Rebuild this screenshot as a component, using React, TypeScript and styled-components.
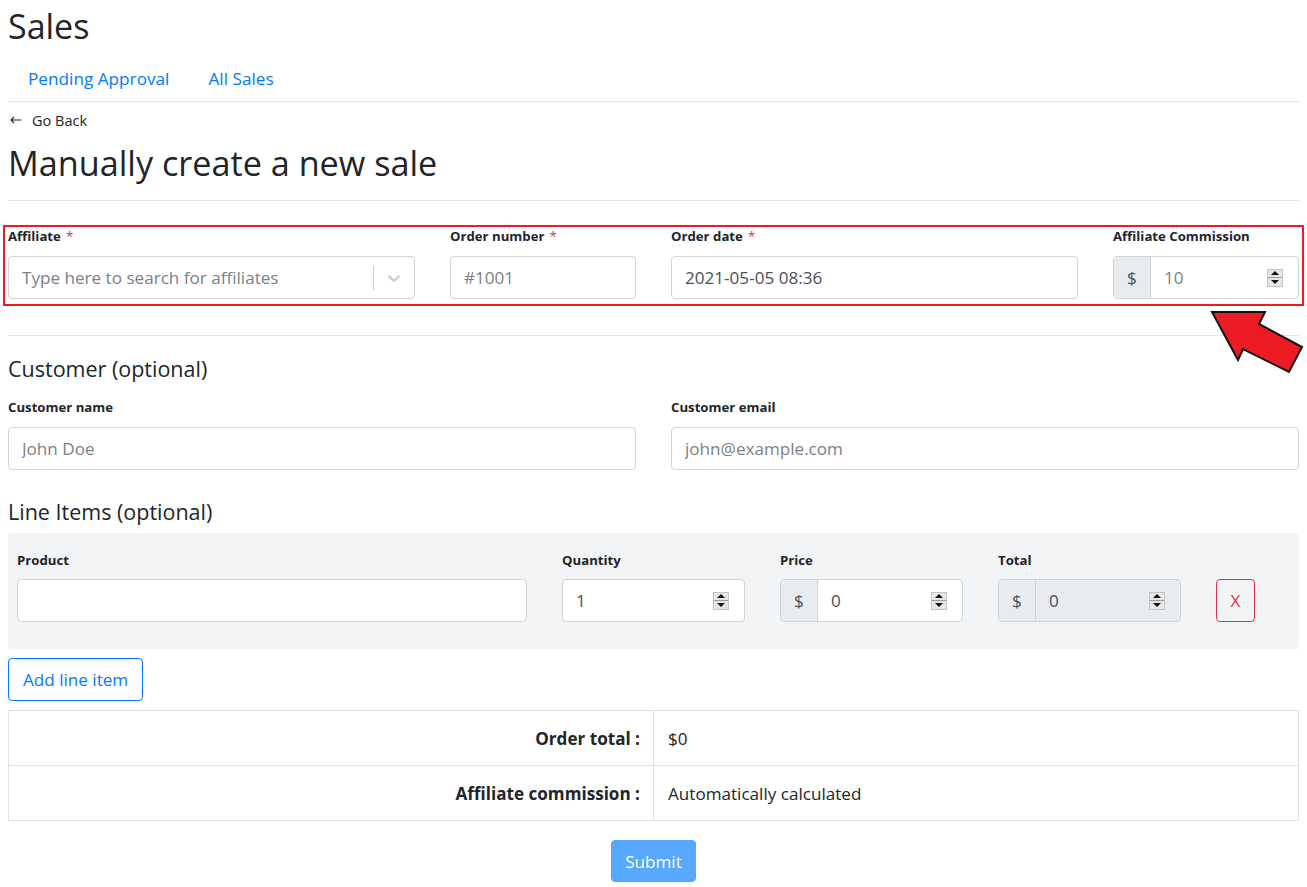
import React from "react";
import styled, { createGlobalStyle } from "styled-components";

const Global = createGlobalStyle`
  html, body { margin: 0; padding: 0; background: #fff; }
  body {
    font-family: "Open Sans", "Noto Sans", Arial, sans-serif;
    color: #212529;
    font-size: 16px;
  }
  * { box-sizing: border-box; }
`;

const Page = styled.div`
  position: relative;
  padding: 0 8px 6px;
  width: 1307px;
`;

const Title = styled.h1`
  margin: 0;
  padding-top: 2px;
  font-size: 34px;
  font-weight: 400;
  line-height: 48px;
`;

const Nav = styled.nav`
  display: flex;
  border-bottom: 1px solid #dee2e6;
  height: 52px;
  padding-top: 5px;
  align-items: center;
`;

const NavLink = styled.a`
  color: #007bff;
  font-size: 17.2px;
  padding: 0 19px 0 20px;
  text-decoration: none;
`;

const Back = styled.a`
  display: flex;
  align-items: center;
  gap: 10px;
  margin-top: 7px;
  font-size: 14.5px;
  color: #212529;
  text-decoration: none;
  height: 22px;
  padding-left: 2px;
`;

const Heading = styled.h2`
  margin: 0;
  font-size: 34.2px;
  font-weight: 400;
  line-height: 44px;
  padding-top: 10px;
`;

const Rule = styled.hr<{ $top: number; $bottom: number }>`
  border: 0;
  border-top: 1px solid #e3e4e6;
  margin: ${(p) => `${p.$top}px 0 ${p.$bottom}px`};
`;

const Highlight = styled.div`
  border: 2px solid #ed1c24;
  margin: 0 -5px;
  padding: 1px 3px 5px;
`;

const Row = styled.div<{ $cols: string; $top?: number }>`
  display: grid;
  grid-template-columns: ${(p) => p.$cols};
  column-gap: 35px;
  margin-top: ${(p) => p.$top ?? 0}px;
`;

const Field = styled.div`
  display: flex;
  flex-direction: column;
  min-width: 0;
`;

const ButtonCell = styled.div`
  display: flex;
  align-items: flex-end;
`;

const Label = styled.label<{ $gap?: number }>`
  font-size: 13.2px;
  font-weight: 700;
  line-height: 16px;
  margin-bottom: ${(p) => p.$gap ?? 11}px;
  display: flex;
  gap: 5px;
`;

const Req = styled.span`
  color: #dc3545;
  font-weight: 400;
`;

const Box = styled.div<{ $disabled?: boolean }>`
  display: flex;
  align-items: center;
  height: 43px;
  border: 1px solid #ced4da;
  border-radius: 4px;
  background: ${(p) => (p.$disabled ? "#e9ecef" : "#fff")};
  overflow: hidden;
`;

const Text = styled.input`
  flex: 1;
  min-width: 0;
  border: 0;
  outline: 0;
  background: transparent;
  font-family: inherit;
  font-size: 17.1px;
  color: #495057;
  padding: 0 13px;
  height: 100%;
  &::placeholder { color: #7b8188; }
`;

const Addon = styled.span`
  width: 37px;
  align-self: stretch;
  display: flex;
  align-items: center;
  justify-content: center;
  background: #e9ecef;
  border-right: 1px solid #ced4da;
  font-size: 17.1px;
  color: #495057;
`;

const Spin = styled.span`
  width: 16px;
  height: 18px;
  margin-right: 15px;
  display: flex;
  flex-direction: column;
  background: #e6e6e6;
  border: 1px solid #c4c4c4;
`;

const SpinHalf = styled.span`
  flex: 1;
  display: flex;
  align-items: center;
  justify-content: center;
  & + & { border-top: 1px solid #9a9a9a; }
`;

const Sep = styled.span`
  width: 1px;
  height: 24px;
  background: #ccc;
`;

const Chevron = styled.span`
  width: 40px;
  display: flex;
  justify-content: center;
  color: #ccc;
`;

const Section = styled.h4<{ $top?: number }>`
  margin: ${(p) => p.$top ?? 0}px 0 0;
  font-size: 21.5px;
  font-weight: 400;
  line-height: 30px;
`;

const LineBox = styled.div`
  background: #f3f4f6;
  border-radius: 4px;
  padding: 19px 9px 27px;
  margin-top: 6px;
`;

const RemoveBtn = styled.button`
  width: 39px;
  height: 43px;
  border: 1px solid #dc3545;
  border-radius: 4px;
  background: transparent;
  color: #dc3545;
  font-family: inherit;
  font-size: 17.1px;
`;

const OutlineBtn = styled.button`
  margin-top: 9px;
  height: 43px;
  padding: 0 14px;
  border: 1px solid #007bff;
  border-radius: 4px;
  background: #fff;
  color: #007bff;
  font-family: inherit;
  font-size: 17.1px;
`;

const Summary = styled.table`
  width: 100%;
  margin-top: 9px;
  border-collapse: collapse;
  font-size: 17.1px;
`;

const Th = styled.th`
  width: 50%;
  text-align: right;
  font-weight: 700;
  border: 1px solid #dee2e6;
  height: 55px;
  padding: 0 13px;
`;

const Td = styled.td`
  border: 1px solid #dee2e6;
  padding: 0 14px;
  height: 55px;
`;

const Actions = styled.div`
  display: flex;
  justify-content: center;
  margin-top: 19px;
`;

const Submit = styled.button`
  height: 42px;
  padding: 0 13px;
  border: 1px solid #007bff;
  background: #007bff;
  opacity: 0.65;
  color: #fff;
  border-radius: 4px;
  font-family: inherit;
  font-size: 17.1px;
`;

const Pointer = styled.svg`
  position: absolute;
  left: 1206px;
  top: 306px;
`;

const Spinner = () => (
  <Spin>
    <SpinHalf>
      <svg width="8" height="4" viewBox="0 0 8 4"><path d="M0 4 L4 0 L8 4Z" fill="#111" /></svg>
    </SpinHalf>
    <SpinHalf>
      <svg width="8" height="4" viewBox="0 0 8 4"><path d="M0 0 L4 4 L8 0Z" fill="#111" /></svg>
    </SpinHalf>
  </Spin>
);

const NumberField = ({ value, prefix, disabled }: { value: string; prefix?: boolean; disabled?: boolean }) => (
  <Box $disabled={disabled}>
    {prefix && <Addon>$</Addon>}
    <Text defaultValue={value} disabled={disabled} />
    <Spinner />
  </Box>
);

export default function App() {
  return (
    <>
      <Global />
      <Page>
        <Title>Sales</Title>
        <Nav>
          <NavLink href="#">Pending Approval</NavLink>
          <NavLink href="#">All Sales</NavLink>
        </Nav>
        <Back href="#">
          <svg width="12" height="8" viewBox="0 0 12 8">
            <path d="M11.5 4H1M4 1L1 4l3 3" fill="none" stroke="#212529" strokeWidth="1.1" />
          </svg>
          Go Back
        </Back>
        <Heading>Manually create a new sale</Heading>
        <Rule $top={15} $bottom={24} />
        <Highlight>
          <Row $cols="minmax(0,407fr) minmax(0,186fr) minmax(0,407fr) minmax(0,186fr)">
            <Field>
              <Label $gap={12}>Affiliate <Req>*</Req></Label>
              <Box>
                <Text placeholder="Type here to search for affiliates" />
                <Sep />
                <Chevron>
                  <svg width="20" height="20" viewBox="0 0 20 20" fill="currentColor">
                    <path d="M4.516 7.548c0.436-0.446 1.043-0.481 1.576 0l3.908 3.747 3.908-3.747c0.533-0.481 1.141-0.446 1.574 0 0.436 0.445 0.408 1.197 0 1.615-0.406 0.418-4.695 4.502-4.695 4.502-0.217 0.223-0.502 0.335-0.787 0.335s-0.57-0.112-0.789-0.335c0 0-4.287-4.084-4.695-4.502s-0.436-1.17 0-1.615z" />
                  </svg>
                </Chevron>
              </Box>
            </Field>
            <Field>
              <Label $gap={12}>Order number <Req>*</Req></Label>
              <Box><Text placeholder="#1001" /></Box>
            </Field>
            <Field>
              <Label $gap={12}>Order date <Req>*</Req></Label>
              <Box><Text defaultValue="2021-05-05 08:36" /></Box>
            </Field>
            <Field>
              <Label $gap={12}>Affiliate Commission</Label>
              <Box>
                <Addon>$</Addon>
                <Text placeholder="10" />
                <Spinner />
              </Box>
            </Field>
          </Row>
        </Highlight>
        <Rule $top={29} $bottom={18} />
        <Section>Customer (optional)</Section>
        <Row $cols="minmax(0,1fr) minmax(0,1fr)" $top={15}>
          <Field>
            <Label $gap={12}>Customer name</Label>
            <Box><Text placeholder="John Doe" /></Box>
          </Field>
          <Field>
            <Label $gap={12}>Customer email</Label>
            <Box><Text placeholder="john@example.com" /></Box>
          </Field>
        </Row>
        <Section $top={27}>Line Items (optional)</Section>
        <LineBox>
          <Row $cols="minmax(0,510fr) minmax(0,183fr) minmax(0,183fr) minmax(0,183fr) minmax(0,74fr)">
            <Field>
              <Label>Product</Label>
              <Box><Text /></Box>
            </Field>
            <Field>
              <Label>Quantity</Label>
              <NumberField value="1" />
            </Field>
            <Field>
              <Label>Price</Label>
              <NumberField value="0" prefix />
            </Field>
            <Field>
              <Label>Total</Label>
              <NumberField value="0" prefix disabled />
            </Field>
            <ButtonCell>
              <RemoveBtn>X</RemoveBtn>
            </ButtonCell>
          </Row>
        </LineBox>
        <OutlineBtn>Add line item</OutlineBtn>
        <Summary>
          <tbody>
            <tr>
              <Th>Order total :</Th>
              <Td>$0</Td>
            </tr>
            <tr>
              <Th>Affiliate commission :</Th>
              <Td>Automatically calculated</Td>
            </tr>
          </tbody>
        </Summary>
        <Actions>
          <Submit disabled>Submit</Submit>
        </Actions>
        <Pointer width="100" height="70" viewBox="1206 306 100 70">
          <polygon
            points="1212,312 1265,312 1259,324 1302,347 1289,372 1243,349 1238,360"
            fill="#ed1c24"
            stroke="#111"
            strokeWidth="2"
            strokeLinejoin="miter"
          />
        </Pointer>
      </Page>
    </>
  );
}
